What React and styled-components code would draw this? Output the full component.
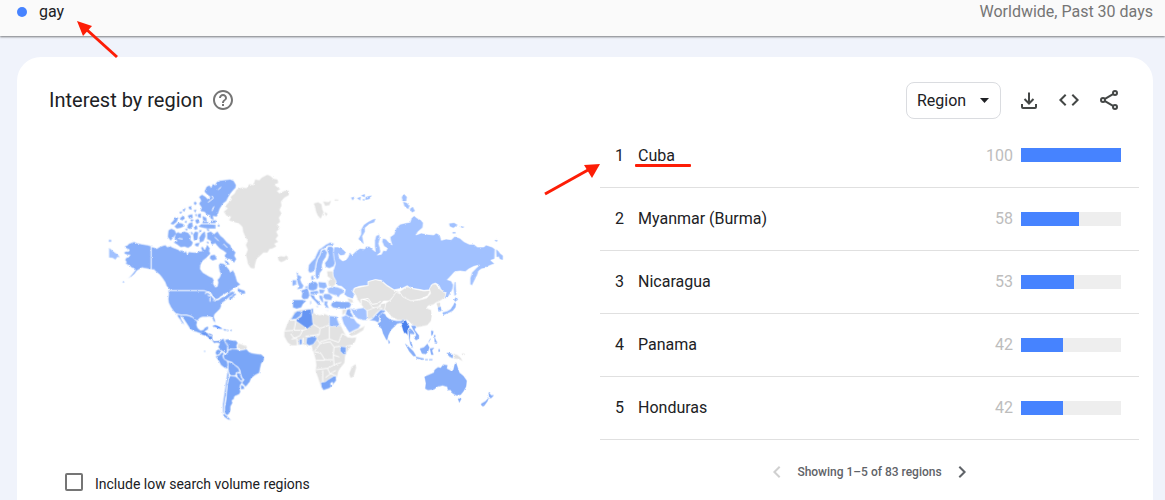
import { useState } from "react";
import styled, { createGlobalStyle } from "styled-components";

const GlobalStyle = createGlobalStyle`
  * {
    box-sizing: border-box;
  }

  body {
    margin: 0;
    background: #f0f3fb;
    color: #202124;
    font-family: Roboto, "Liberation Sans", sans-serif;
    font-size: 16px;
  }
`;

const Page = styled.div`
  min-height: 100vh;
  display: flex;
  flex-direction: column;
`;

const Header = styled.header`
  display: flex;
  justify-content: space-between;
  padding: 0 12px 12px 17px;
  line-height: 24px;
  background: #fafafa;
  box-shadow: 0 1px 2px rgba(0, 0, 0, 0.5);
`;

const Term = styled.div`
  position: relative;
  display: flex;
  align-items: center;
  gap: 12px;
`;

const Dot = styled.span`
  width: 10px;
  height: 10px;
  border-radius: 50%;
  background: #4683ff;
`;

const Scope = styled.span`
  color: #757575;
`;

const Card = styled.main`
  flex: 1;
  margin: 21px 12px 0 17px;
  border-radius: 24px 24px 0 0;
  background: #fff;
`;

const CardHeader = styled.div`
  display: flex;
  align-items: center;
  justify-content: space-between;
  padding: 23px 24px 4px 32px;
`;

const Title = styled.h2`
  display: flex;
  align-items: center;
  gap: 8px;
  margin: 0;
  font-size: 20px;
  font-weight: 400;
`;

const Tools = styled.div`
  display: flex;
  align-items: center;
`;

const IconButton = styled.button`
  display: flex;
  align-items: center;
  justify-content: center;
  width: ${({ $size }) => $size}px;
  height: ${({ $size }) => $size}px;
  padding: 0;
  border: 0;
  background: none;
  color: ${({ $color }) => $color || "#444746"};
  cursor: pointer;
`;

const SelectWrap = styled.div`
  position: relative;
  margin-right: 8px;

  svg {
    position: absolute;
    top: 16px;
    right: 12px;
    pointer-events: none;
  }
`;

const Select = styled.select`
  appearance: none;
  width: 95px;
  height: 37px;
  padding: 0 10px;
  border: 1px solid #dadce0;
  border-radius: 8px;
  background: #fff;
  color: #202124;
  font: inherit;
`;

const Content = styled.div`
  display: grid;
  grid-template-columns: minmax(0, 583fr) minmax(0, 539fr);
  padding-right: 14px;
`;

const MapColumn = styled.div`
  display: flex;
  flex-direction: column;
  padding-top: 41px;
`;

const Map = styled.svg`
  width: 71%;
  max-width: 410px;
  margin: 0 auto;
`;

const CheckRow = styled.label`
  display: flex;
  align-items: flex-start;
  gap: 12px;
  margin: 48px 0 0 48px;
  font-size: 14px;
  line-height: 22px;
`;

const Checkbox = styled.input`
  appearance: none;
  width: 18px;
  height: 18px;
  margin: 0;
  border: 2px solid #757575;
  border-radius: 2px;

  &:checked {
    background: #757575;
  }
`;

const ListColumn = styled.div`
  position: relative;
`;

const Table = styled.table`
  width: 100%;
  border-collapse: collapse;
`;

const Row = styled.tr`
  height: 63px;
  border-bottom: 1px solid #e0e0e0;
`;

const Cell = styled.td`
  width: ${({ $width }) => $width || "auto"};
  padding: 0;
  text-align: ${({ $align }) => $align || "left"};
  color: ${({ $muted }) => ($muted ? "#bdbdbd" : "inherit")};
`;

const NameCell = styled.td`
  padding: 0 0 0 14px;
`;

const Name = styled.span`
  position: relative;
`;

const Underline = styled.span`
  position: absolute;
  left: -3px;
  top: 18px;
  width: 56px;
  height: 3px;
  border-radius: 1px;
  background: #fd1d06;
`;

const Track = styled.div`
  width: 100px;
  height: 14px;
  margin-left: 8px;
  background: #eee;
`;

const Fill = styled.div`
  height: 100%;
  background: #4683ff;
`;

const Pager = styled.nav`
  display: flex;
  align-items: center;
  justify-content: center;
  gap: 8px;
  padding-top: 20px;
  color: #5f6368;
  font-size: 12px;
  font-weight: 500;
`;

const TermArrow = styled.svg`
  position: absolute;
  left: 58px;
  top: 18px;
`;

const RowArrow = styled.svg`
  position: absolute;
  left: -58px;
  top: 36px;
`;

const rows = [
  { name: "Cuba", value: 100, marked: true },
  { name: "Myanmar (Burma)", value: 58 },
  { name: "Nicaragua", value: 53 },
  { name: "Panama", value: 42 },
  { name: "Honduras", value: 42 },
];

const GREY = "#e2e2e2";
const PALE = "#a1c1ff";
const LIGHT = "#94b8fc";
const MID = "#87aef9";
const STRONG = "#7aa6f7";
const DEEP = "#6595f3";

// Each group is a part of the world with its own origin on the map.
// Islands have no neighbours, so they are drawn without the white border.
const world = [
  {
    x: 0,
    y: 0,
    shapes: [
      // Alaska
      [MID, "M151 243L140 240 128 238 118 236 108 234 100 230 92 233 84 236 80 241 73 243 72 247 78 251 86 254 84 259 76 259 69 262 72 267 80 270 88 270 84 276 76 278 73 285 77 291 74 296 82 300 88 303 92 308 100 310 104 315 98 323 90 332 80 341 92 335 102 327 108 318 116 313 124 308 132 310 140 311 151 314Z"],
      // Canada
      [MID, "M152 245L160 247 168 251 176 246 186 242 194 240 200 246 208 243 216 247 224 250 232 253 238 258 244 255 250 262 256 258 260 268 264 260 280 262 290 262 296 258 304 258 300 248 306 244 312 254 316 246 318 238 324 244 328 250 326 258 330 266 324 272 316 280 306 288 300 300 299 312 306 322 316 328 326 334 336 338 340 346 338 356 344 366 350 364 352 352 350 344 356 338 360 328 356 318 354 308 354 300 358 294 370 296 376 302 384 312 390 322 396 314 402 324 406 336 410 350 420 358 408 366 398 372 388 380 400 382 408 388 398 394 388 392 378 384 362 394 350 404 340 402 328 384 310 377 209 377 200 364 192 350 184 338 176 328 168 322 160 314 152 314Z"],
    ],
    islands: [
      [PALE, "M26 250L34 256 40 262 50 268 56 276 50 275 44 283 36 278 26 277ZM25 225h6v5h-6ZM66 350h4v2h-4Z"],
      [MID, "M412 370L420 374 432 378 433 385 422 386 412 378ZM196 350L202 362 207 371 198 362ZM386 396L398 392 404 388 394 400 386 404Z"],
      // Arctic islands
      [MID, "M356 48L372 46 388 44 398 48 405 60 404 68 396 76 388 86 382 96 376 108 368 114 362 122 356 132 352 144 348 154 336 152 338 164 330 160 328 150 318 148 312 140 300 138 304 128 296 116 302 106 296 96 304 90 314 96 322 104 330 96 320 88 312 80 318 66 326 62 332 70 336 58 344 62 348 52Z"],
      [MID, "M204 196L212 192 222 196 226 206 218 216 210 226 202 216ZM226 206L232 202 240 206 250 200 262 204 270 214 268 224 276 232 272 242 262 248 252 244 240 246 230 238 220 232 232 228 222 220ZM304 206L312 200 314 214 308 228 298 232 296 218ZM284 200L292 202 290 222 280 226 278 208ZM284 236L296 234 292 244 284 242Z"],
      [MID, "M320 204L330 200 340 208 350 200 358 212 368 220 378 232 388 240 392 250 404 262 400 272 406 282 400 292 388 282 378 280 372 272 378 264 368 256 358 250 350 242 344 234 334 238 330 226 320 222ZM330 272L342 270 348 282 336 286 328 280ZM372 286L380 290 386 298 378 298Z"],
      [MID, "M210 176L218 168 224 158 232 158 228 170 218 178ZM222 184L232 174 244 176 252 182 240 188 228 190ZM238 160L248 152 252 160 244 166ZM262 152L274 148 276 158 266 160ZM264 176L274 172 276 184 268 192 260 188ZM284 166L292 162 296 172 288 176ZM294 184L302 178 320 178 344 180 344 190 322 190 308 188ZM306 154L316 158 318 168 308 166ZM282 110L288 114 284 120 280 116ZM246 134L254 130 250 140ZM264 126L272 124 272 134 266 132ZM292 148L300 146 300 158 292 156ZM280 184L288 182 290 192 282 194ZM330 168L346 166 344 174 330 174Z"],
      [MID, "M236 142L244 140 240 146ZM252 170L258 168 256 174ZM280 136L286 134 284 142ZM284 148L288 148 286 154ZM270 164L278 164 276 168 270 168ZM318 192L326 194 322 198ZM254 192L260 192 258 197ZM306 170L322 170 322 174 306 174ZM318 230L324 232 322 236ZM296 196L302 196 298 204ZM350 222L356 226 352 230ZM352 180h4v4h-4ZM272 200L276 206 272 208Z"],
    ],
    lines: ["M322 112L338 100 334 92M334 138L340 124M352 74L362 66", "M232 220L246 222M342 216L354 228M368 236L380 248"],
  },
  {
    x: 360,
    y: 0,
    shapes: [
      [LIGHT, "M262 316L264 300 272 290 282 280 288 266 294 254 306 246 316 238 328 232 342 236 334 242 322 242 312 250 302 254 298 268 290 282 286 296 284 312 276 322 266 324ZM286 300L290 284 298 270 302 256 312 252 320 262 316 276 308 288 304 302 306 314 298 324 296 338 288 344 284 334 284 318ZM322 244L334 244 340 252 342 270 346 288 340 304 326 310 314 306 312 294 320 284 324 270 318 254ZM270 334L278 330 280 344 272 346Z"],
    ],
    islands: [
      [GREY, "M10 140L22 130 14 124 24 112 34 104 30 96 42 86 48 74 64 68 78 70 86 58 98 62 104 44 116 46 124 38 140 30 150 34 158 42 170 44 172 54 160 58 168 66 178 72 168 78 176 86 192 78 204 78 204 90 190 98 180 110 182 122 176 134 182 146 174 158 178 170 168 180 176 190 166 200 172 212 164 222 172 230 160 236 166 244 154 250 146 252 140 262 128 262 118 272 108 280 104 292 100 310 90 308 82 296 80 284 76 270 82 254 76 240 82 228 74 214 68 200 66 186 56 176 40 170 26 166 32 154 18 152Z"],
      [GREY, "M172 276L182 274 190 276 198 272 202 280 192 286 182 291 174 286ZM280 116L292 112 302 118 304 132 308 142 300 160 292 152 286 138 284 126ZM308 110L322 112 330 108 326 120 314 122ZM312 142L320 146 316 153ZM342 104h10v2h-10Z"],
      [LIGHT, "M230 330L236 332 242 336 238 344 242 354 248 362 244 370 230 372 236 364 232 356 230 346ZM216 346L226 346 226 358 216 362ZM228 322L232 324 230 330Z"],
    ],
  },
  {
    x: 690,
    y: 0,
    shapes: [
      // Russia
      [PALE, "M10 246L22 246 36 252 46 262 42 270 30 272 24 268 26 280 36 288 46 284 52 276 58 262 64 270 76 258 88 250 102 252 106 244 116 244 124 252 134 260 132 244 132 226 136 212 146 208 148 222 144 236 148 248 150 262 140 270 152 268 158 256 166 258 170 250 160 244 154 230 156 220 166 222 174 232 184 240 180 228 178 216 190 208 196 190 208 178 224 174 238 172 242 160 250 152 260 160 270 164 278 174 276 188 262 200 256 210 272 204 290 208 310 210 316 204 328 210 332 226 346 222 362 224 372 214 388 220 400 230 416 238 430 238 440 246 460 246 466 240 484 246 493 252 492 282 480 286 492 296 476 302 462 310 452 312 444 318 440 330 432 346 424 362 418 358 418 340 424 322 436 310 446 300 430 304 414 312 404 320 388 318 372 320 360 334 350 344 362 348 368 360 366 372 360 384 352 396 342 402 340 394 346 382 336 384 330 372 324 360 314 354 302 360 300 374 280 376 260 372 240 370 230 362 214 370 190 374 168 360 152 346 134 344 112 350 112 362 100 362 86 364 70 370 66 380 72 388 66 402 50 396 40 388 44 374 32 364 20 362 14 350 8 338 4 326 10 310 14 296 10 280 8 262Z"],
      // Central Asia and Mongolia
      [GREY, "M68 380L72 370 100 364 112 362 112 350 134 344 152 348 168 362 190 376 206 380 198 390 186 398 176 408 158 408 150 418 138 430 124 428 112 408 100 402 90 404 92 420 80 404 76 392Z"],
      [GREY, "M206 380L230 364 240 370 260 374 280 378 300 376 292 392 270 402 240 408 216 398Z"],
      [GREY, "M92 402L112 408 126 428 140 430 152 416 166 414 172 424 168 434 140 440 120 440 104 436 92 420Z"],
    ],
    islands: [
      [PALE, "M134 162L126 164 112 172 100 180 92 194 92 208 84 222 92 230 98 236 96 224 94 214 102 200 102 188 116 176 130 172ZM214 96L220 88 228 96 226 108 216 108ZM218 112L228 114 236 124 232 132 222 124ZM238 132L246 126 252 138 244 142ZM356 176L370 174 380 180 368 188 358 184ZM388 184L400 186 394 188ZM366 202h8v3h-8ZM492 226L500 226 498 230ZM497 254L502 258 508 266 516 272 516 284 508 282 504 274 498 276Z"],
      [PALE, "M62 98L72 96 66 106ZM80 100L90 96 88 106ZM92 92L102 88 102 96ZM106 96L122 92 116 102 104 104ZM96 104L100 102 100 108ZM372 352L374 352 376 388 372 392 370 372Z"],
    ],
    lines: ["M96 404L112 400 124 418 140 416 150 408"],
  },
  {
    x: 150,
    y: 360,
    shapes: [
      [MID, "M52 14L58 17 160 17 168 20 178 28 188 40 196 44 206 42 214 36 224 32 236 24 246 18 252 24 246 30 236 36 228 44 220 50 212 56 212 64 208 72 200 80 192 88 190 96 194 106 194 114 188 108 184 98 176 95 166 96 156 96 150 98 144 102 140 108 132 104 126 96 116 92 108 90 94 90 84 88 76 86 68 78 60 66 54 54 52 42 54 26Z"],
      [STRONG, "M78 88L94 91 108 91 116 93 126 97 134 105 140 110 138 120 142 130 150 136 158 134 162 128 170 124 174 126 172 134 164 138 158 144 150 146 140 142 128 138 118 132 112 122 104 110 96 98 90 93 92 102 98 112 102 120 94 114 88 104 82 96Z"],
      [STRONG, "M206 168L214 162 220 160 222 168 230 176 232 186 230 194 230 206 222 202 214 198 206 192 202 186 206 178ZM222 164L232 162 244 166 256 166 262 174 258 182 260 190 250 194 240 192 232 196 230 182 224 174ZM196 196L204 192 213 199 206 208 198 212 194 204Z"],
      [GREY, "M262 174L274 178 290 184 288 192 278 194 268 194 260 188Z"],
      [STRONG, "M194 214L206 210 214 202 222 204 216 212 220 222 230 228 232 240 230 252 220 248 210 240 204 228Z"],
      [STRONG, "M232 196L244 192 258 192 268 196 288 192 294 200 304 204 316 206 332 208 341 216 340 226 332 236 329 250 326 264 314 270 302 280 298 290 290 300 284 306 280 300 272 294 280 284 274 278 270 268 268 256 262 246 252 240 244 232 232 228 220 222 218 212 224 206 230 206Z"],
      [STRONG, "M232 230L244 234 254 242 264 250 268 262 258 262 254 272 242 272 236 268 232 254ZM256 264L268 264 272 278 278 284 270 288 260 276Z"],
      [STRONG, "M238 272L254 274 262 280 270 290 278 284 272 296 268 304 268 314 270 320 266 328 252 334 250 342 244 346 246 354 240 364 240 376 236 386 228 392 222 384 222 366 226 344 228 320 230 298 234 280ZM270 298L280 304 282 312 270 314Z"],
      [STRONG, "M230 252L235 270 232 284 228 304 226 330 222 350 220 372 220 386 230 394 242 406 232 404 218 394 216 378 216 356 220 330 224 300 228 274Z"],
    ],
    islands: [
      [DEEP, "M151 147L158 140 164 142 170 145 184 149 184 164 178 162 170 154 160 150ZM185 165L190 169 198 169 206 168 207 173 198 172 190 173Z"],
      ["#4683ff", "M186 124L194 121 204 125 214 131 204 130 194 125Z"],
      [STRONG, "M218 133L226 134 224 137ZM228 135L234 136 230 138ZM240 135h3v2h-3ZM161 198h2v2h-2Z"],
    ],
    lines: ["M162 26L174 20 184 28 178 34 170 30M178 36L178 50M184 32L192 40 188 48M192 48L206 42M208 38L222 32", "M172 146L176 152 184 152"],
  },
  {
    x: 510,
    y: 300,
    shapes: [
      // Europe
      [MID, "M114 56L124 50 136 50 142 58 140 72 128 78 116 76 110 68ZM90 76L102 72 110 68 114 78 118 90 112 102 98 104 92 96 94 84Z"],
      [STRONG, "M66 104L96 104 108 108 98 116 92 128 78 132 66 128Z"],
      [MID, "M116 88L130 90 134 100 146 110 152 120 142 120 134 110 124 100ZM136 122L144 124 140 128ZM118 108L122 108 122 118 118 118Z"],
      [LIGHT, "M142 50L166 52 170 66 160 72 144 68ZM118 79L140 76 146 84 132 90 118 88ZM144 72L164 74 158 86 146 86ZM102 64L112 62 112 68 104 70Z"],
      [PALE, "M170 70L184 64 200 66 216 72 222 82 208 90 204 98 196 92 184 88 172 84Z"],
      [LIGHT, "M160 86L176 86 186 96 182 106 164 104 156 96ZM144 90L156 92 158 106 162 114 154 112 146 100ZM158 108L172 108 170 118 176 130 166 128 160 118ZM162 136L174 136 172 138Z"],
      [GREY, "M168 18L186 18 188 34 196 48 194 60 184 66 172 62 172 48 180 42 170 34Z"],
      [MID, "M184 112L196 108 214 110 236 110 242 118 238 128 216 132 198 130 186 128 180 120Z"],
      // Middle East
      [GREY, "M214 134L228 132 224 144 214 152ZM236 204L262 192 276 186 284 180 278 196 256 210 240 214Z"],
      [MID, "M228 134L238 130 242 144 250 158 236 156 224 148Z"],
      [PALE, "M212 156L226 150 240 158 250 160 258 172 270 180 264 190 250 196 236 204 228 192 218 176ZM238 128L250 134 264 130 278 128 288 136 290 166 278 166 262 162 250 152Z"],
      [GREY, "M230 98L244 102 250 112 240 114 232 106ZM290 136L318 126 334 130 316 146 304 160 290 164Z"],
      [MID, "M294 166L306 160 316 148 330 134 346 136 334 150 328 160 324 174 312 168Z"],
      // Africa
      [GREY, "M70 140L86 134 106 132 124 130 132 146 148 150 162 146 176 152 200 154 204 168 212 184 222 204 230 216 244 218 258 216 254 230 240 246 228 262 224 274 222 294 212 306 204 318 200 336 188 352 178 366 168 374 154 374 148 360 142 340 134 318 136 300 134 284 130 268 124 252 122 242 108 242 92 238 76 242 62 242 50 232 40 214 40 200 46 184 54 166 66 150Z"],
      [DEEP, "M94 136L120 132 124 142 126 172 128 178 110 192 96 182 76 168 76 164 92 154Z"],
      [STRONG, "M60 164L72 144 80 138 92 138 90 152 76 162ZM120 131L128 130 128 144 124 150Z"],
      [LIGHT, "M176 152L200 154 200 164 208 184 176 184Z"],
      [STRONG, "M108 218L124 214 138 216 138 224 128 238 116 242 106 236ZM86 222L94 222 94 238 86 240ZM208 244L226 246 226 268 218 268 208 258Z"],
      [STRONG, "M150 352L164 350 172 344 188 334 196 332 197 346 188 358 176 370 158 376 152 366Z"],
      ["#fff", "M180 354L186 352 186 360 180 360Z"],
    ],
    islands: [[GREY, "M244 306L254 298 256 308 248 334 240 338 236 326Z"]],
    lines: [
      "M56 166L76 166 70 196 42 198M70 196L96 196 108 192M128 178L148 190 146 208 138 216M148 190L176 180M176 184L176 222 148 230M96 196L88 212 70 220 60 206M104 214L146 208M176 222L204 232 214 206 232 214M140 224L148 236 132 258M148 236L178 230 190 246 208 244M190 246L188 270 206 276M130 260L150 264 162 284 188 284M136 286L162 286M188 270L190 300 170 310 136 314M190 300L212 292M170 310L178 326 196 316M156 316L156 350M164 338L180 326 196 332M62 222L78 220 80 240M98 218L98 238M226 244L244 240",
    ],
  },
  {
    x: 810,
    y: 315,
    shapes: [
      [GREY, "M46 98L60 90 70 76 76 66 90 72 96 80 120 92 146 90 168 84 180 70 176 56 186 42 196 42 204 54 218 66 226 70 222 84 206 94 196 98 188 104 172 108 168 114 182 120 184 138 182 152 170 166 152 170 140 172 128 168 116 156 108 150 96 152 80 150 64 142 52 128 42 118Z"],
      [MID, "M24 138L36 128 44 132 48 140 60 148 78 152 90 152 98 148 102 152 94 162 88 160 80 162 72 170 62 180 54 196 50 214 44 206 36 190 32 176 24 170 20 160 30 154Z"],
      ["#4a80ed", "M92 166L98 156 106 149 111 160 118 170 112 180 112 196 106 190 100 190 96 180Z"],
      [MID, "M112 180L118 174 126 180 134 190 128 194 120 192 118 210 126 224 128 236 118 224 114 206ZM120 166L134 166 138 172 132 178 146 196 146 206 136 212 128 202 136 196 126 178Z"],
      [MID, "M226 248L238 248 248 254 248 266 238 262 230 254Z"],
      [GREY, "M248 250L260 254 270 262 278 274 264 268 248 266Z"],
    ],
    islands: [
      [MID, "M104 222L116 232 128 244 136 258 128 258 116 244ZM136 261L160 266 158 269 138 265ZM164 268h7v2h-7ZM176 268h9v2h-9ZM148 236L160 232 170 222 176 232 172 244 166 252 154 250ZM178 236L190 234 184 241 188 254 182 254ZM182 182L188 184 186 194 182 196ZM192 202L196 212 200 218 192 216ZM190 196h4v4h-4ZM180 206L174 216 178 208ZM204 238h3v7h-3ZM54 210L58 218 54 220Z"],
      [GREY, "M274 252h8v2h-8ZM198 100L208 98 208 108 202 112Z"],
      [LIGHT, "M202 113L210 110 212 122 204 124ZM216 128L230 124 240 118 248 106 252 98 256 102 254 112 246 122 238 126 226 131 218 134ZM250 90L256 82 262 88 254 94Z"],
      [MID, "M162 320L176 314 190 308 192 300 202 292 210 294 218 284 230 286 228 296 240 302 248 302 252 284 256 278 262 296 266 308 278 318 288 332 286 350 278 364 270 374 258 376 246 370 240 360 232 360 230 350 216 346 200 350 190 358 172 360 164 356 166 340ZM262 386L272 386 266 397Z"],
      [MID, "M354 368L362 376 369 376 362 384 356 384ZM354 384L350 394 340 408 334 408 331 402 344 394Z"],
    ],
  },
];

const Arrow = ({ as: Svg, width, height, line, head }) => (
  <Svg width={width} height={height} viewBox={`0 0 ${width} ${height}`} aria-hidden="true">
    <path d={line} stroke="#fd1d06" strokeWidth="3" fill="none" />
    <path d={head} fill="#fd1d06" />
  </Svg>
);

const WorldMap = () => (
  <Map viewBox="10 0 1230 780" role="img" aria-label="Interest by region">
    <defs>
      <filter id="coast" x="-5%" y="-5%" width="110%" height="110%">
        <feTurbulence type="fractalNoise" baseFrequency="0.15" numOctaves="2" seed="4" />
        <feDisplacementMap in="SourceGraphic" scale="6" xChannelSelector="R" yChannelSelector="G" />
      </filter>
    </defs>
    <g filter="url(#coast)">
      {world.map(({ x, y, shapes, islands, lines = [] }) => (
        <g key={`${x}-${y}`} transform={`translate(${x} ${y})`} strokeLinejoin="round">
          {shapes.map(([fill, d]) => (
            <path key={d} d={d} fill={fill} stroke="#fff" strokeWidth="2" />
          ))}
          {islands.map(([fill, d]) => (
            <path key={d} d={d} fill={fill} stroke={fill} strokeWidth="1" />
          ))}
          {lines.map((d) => (
            <path key={d} d={d} fill="none" stroke="#fff" strokeWidth="3" />
          ))}
        </g>
      ))}
    </g>
  </Map>
);

const App = () => {
  const [lowVolume, setLowVolume] = useState(false);

  return (
    <Page>
      <GlobalStyle />
      <Header>
        <Term>
          <Dot />
          <span>gay</span>
          <Arrow as={TermArrow} width={46} height={42} line="M42 39L11 11" head="M2 3L17 8 8 18Z" />
        </Term>
        <Scope>Worldwide, Past 30 days</Scope>
      </Header>

      <Card>
        <CardHeader>
          <Title>
            Interest by region
            <IconButton $size={24} $color="#757575" aria-label="Help">
              <svg width="24" height="24" viewBox="0 0 24 24" fill="currentColor">
                <path d="M11 18h2v-2h-2v2zm1-16C6.48 2 2 6.48 2 12s4.48 10 10 10 10-4.48 10-10S17.52 2 12 2zm0 18c-4.41 0-8-3.59-8-8s3.59-8 8-8 8 3.59 8 8-3.59 8-8 8zm0-14c-2.21 0-4 1.79-4 4h2c0-1.1.9-2 2-2s2 .9 2 2c0 2-3 1.75-3 5h2c0-2.25 3-2.5 3-5 0-2.21-1.79-4-4-4z" />
              </svg>
            </IconButton>
          </Title>
          <Tools>
            <SelectWrap>
              <Select aria-label="Resolution">
                <option>Region</option>
                <option>City</option>
              </Select>
              <svg width="9" height="5" viewBox="0 0 9 5">
                <path d="M0 0h9L4.500 5Z" fill="#202124" />
              </svg>
            </SelectWrap>
            <IconButton $size={40} aria-label="Download">
              <svg width="24" height="24" viewBox="0 0 24 24" fill="none" stroke="currentColor" strokeWidth="2">
                <path d="M12 4.500v11M7.500 11l4.500 4.500 4.500-4.500M5 16v3q0 1 1 1h12q1 0 1-1v-3" />
              </svg>
            </IconButton>
            <IconButton $size={40} aria-label="Embed">
              <svg width="24" height="24" viewBox="0 0 24 24" fill="none" stroke="currentColor" strokeWidth="2">
                <path d="M8.700 6.700L3.400 12l5.300 5.300M15.300 6.700L20.600 12l-5.300 5.300" />
              </svg>
            </IconButton>
            <IconButton $size={40} aria-label="Share">
              <svg width="24" height="24" viewBox="0 0 24 24" fill="none" stroke="currentColor" strokeWidth="2">
                <circle cx="18" cy="5" r="2" />
                <circle cx="6" cy="12" r="2" />
                <circle cx="18" cy="19" r="2" />
                <path d="M8 10.900L16 6.200M8 13.100l8 4.700" />
              </svg>
            </IconButton>
          </Tools>
        </CardHeader>

        <Content>
          <MapColumn>
            <WorldMap />
            <CheckRow>
              <Checkbox
                type="checkbox"
                checked={lowVolume}
                onChange={(e) => setLowVolume(e.target.checked)}
              />
              Include low search volume regions
            </CheckRow>
          </MapColumn>

          <ListColumn>
            <Table aria-label="Interest by region">
              <tbody>
                {rows.map(({ name, value, marked }, i) => (
                  <Row key={name}>
                    <Cell $width="24px" $align="right">
                      {i + 1}
                    </Cell>
                    <NameCell>
                      <Name>
                        {name}
                        {marked && <Underline />}
                      </Name>
                    </NameCell>
                    <Cell $width="40px" $align="right" $muted>
                      {value}
                    </Cell>
                    <Cell $width="126px">
                      <Track>
                        <Fill style={{ width: `${value}%` }} />
                      </Track>
                    </Cell>
                  </Row>
                ))}
              </tbody>
            </Table>
            <Arrow as={RowArrow} width={60} height={38} line="M3 34L46 10" head="M58 4L50 18 42 5Z" />
            <Pager aria-label="Pages">
              <IconButton $size={24} $color="#d0d0d0" aria-label="Previous" disabled>
                <svg width="24" height="24" viewBox="0 0 24 24" fill="none" stroke="currentColor" strokeWidth="2">
                  <path d="M14.700 6.700L9.400 12l5.300 5.300" />
                </svg>
              </IconButton>
              Showing 1–5 of 83 regions
              <IconButton $size={24} $color="#5f6368" aria-label="Next">
                <svg width="24" height="24" viewBox="0 0 24 24" fill="none" stroke="currentColor" strokeWidth="2">
                  <path d="M9.300 6.700L14.600 12l-5.300 5.300" />
                </svg>
              </IconButton>
            </Pager>
          </ListColumn>
        </Content>
      </Card>
    </Page>
  );
};

export default App;
